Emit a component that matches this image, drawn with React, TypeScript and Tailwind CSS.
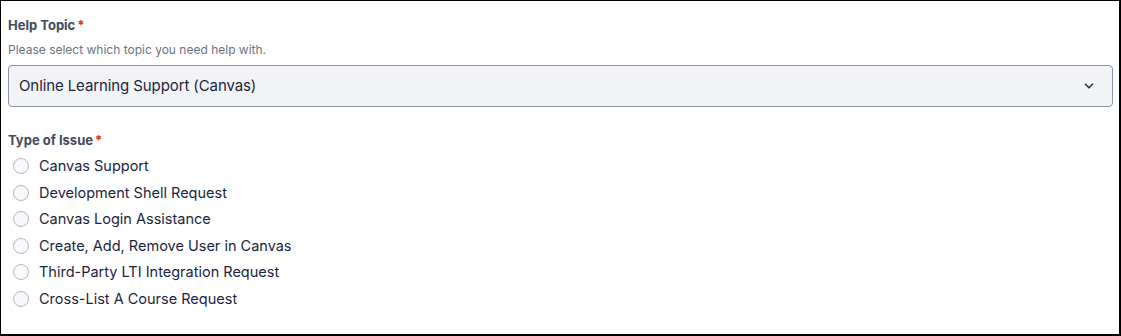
import { ChevronDown } from 'lucide-react';

const issues = [
    'Canvas Support',
    'Development Shell Request',
    'Canvas Login Assistance',
    'Create, Add, Remove User in Canvas',
    'Third-Party LTI Integration Request',
    'Cross-List A Course Request',
];

export default function App() {
    return (
        <div
            className="h-[336px] w-[1121px] border-l border-t border-r-2 border-b-2 border-black bg-white pl-[7px] pr-[6px] pt-[16px] text-[#1b2540]"
            style={{ fontFamily: 'Inter, "Noto Sans", sans-serif' }}
        >
            {/* Help topic */}
            <div className="text-[13px] font-bold leading-[16px] text-[#414b60]">
                Help Topic<span className="ml-[2px] text-[#d92d20]">*</span>
            </div>
            <p className="mt-[9px] text-[12px] leading-[15px] text-[#6b7384]">
                Please select which topic you need help with.
            </p>
            <div className="mt-[8px] flex h-[42px] items-center justify-between rounded-[4px] border border-[#8a94a6] bg-[#f3f4f7] pl-[10px] pr-[16px]">
                <span className="text-[15px] tracking-[-0.1px]">Online Learning Support (Canvas)</span>
                <ChevronDown size={14} strokeWidth={3} className="text-[#323b4f]" />
            </div>

            {/* Type of issue */}
            <div className="mt-[25px] text-[13px] font-bold leading-[16px] text-[#414b60]">
                Type of Issue<span className="ml-[2px] text-[#d92d20]">*</span>
            </div>
            <div className="mt-[5px] flex flex-col">
                {issues.map((label) => (
                    <label key={label} className="flex h-[26.5px] items-center gap-[10px] pl-[5px]">
                        <span className="h-[16px] w-[16px] rounded-full border border-[#b3b9c4] bg-[#f8f9fb]" />
                        <span className="text-[14.5px]">{label}</span>
                    </label>
                ))}
            </div>
        </div>
    );
}
